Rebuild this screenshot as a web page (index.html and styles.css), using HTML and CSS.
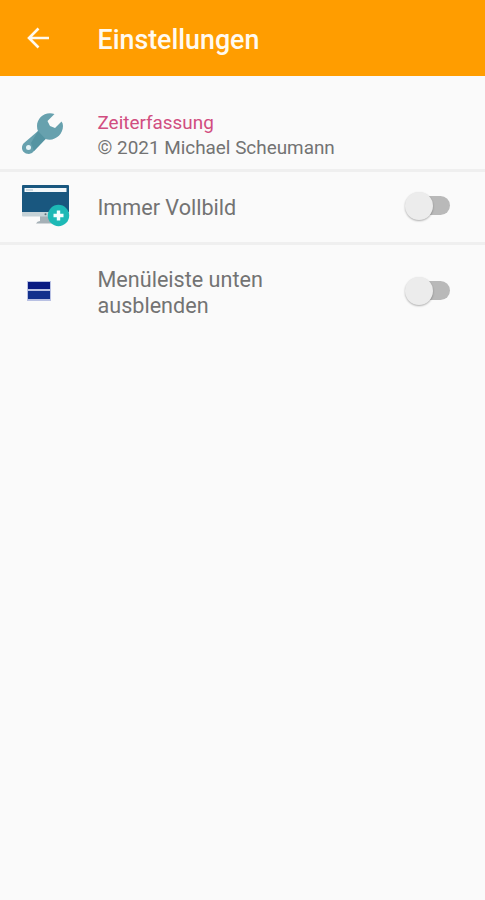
FILE: index.html
```html
<!DOCTYPE html>
<html lang="de">
<head>
    <meta charset="UTF-8">
    <meta name="viewport" content="width=device-width, initial-scale=1.0">
    <title>Einstellungen</title>
    <link rel="stylesheet" href="styles.css">
</head>
<body>

    <header class="toolbar">
        <a href="#" class="back" aria-label="Zurück">
            <svg width="24" height="24" viewBox="0 0 24 24">
                <path d="M12.5 2.5 L3 12 L12.5 21.5 M3 12 H23" fill="none" stroke="#fffaf0" stroke-width="2.6"/>
            </svg>
        </a>
        <h1>Einstellungen</h1>
    </header>

    <main class="settings">
        <section class="row about">
            <div class="icon">
                <svg width="44" height="44" viewBox="0 0 44 44">
                    <path d="M33.500 2 C24 -1 16 6 16 14 Q16 17 17 19 L3 31 C-1 35 1 42 8 42 Q11 42 13 39 L24.500 27 C33 30 42 23 42 14 Q42 11 40.500 9.500 L34 16 L29 14 L26.500 9 Z" fill="#67a1ae"/>
                    <path d="M17 19 L24.500 27 L13 39 L10 31 Z" fill="#5594a2"/>
                    <circle cx="7.500" cy="35.500" r="2.500" fill="#e4f3f6"/>
                </svg>
            </div>
            <div class="text">
                <div class="app-name">Zeiterfassung</div>
                <div class="copyright">© 2021 Michael Scheumann</div>
            </div>
        </section>

        <section class="row fullscreen">
            <div class="icon">
                <svg width="50" height="44" viewBox="0 0 50 44">
                    <path d="M19 32 H30 V38 H36 V39.500 H15 Q16 37 19 37 Z" fill="#a5b0b6"/>
                    <rect x="1" y="1.500" width="47" height="31" rx="1" fill="#c5d2d7"/>
                    <path d="M2 1 H47 Q48 1 48 2 V28 H1 V2 Q1 1 2 1 Z" fill="#19577f"/>
                    <rect x="3.500" y="4" width="42" height="4" fill="#f2f7fa"/>
                    <path d="M5 6 H12" stroke="#a2b9c7" stroke-width="1"/>
                    <circle cx="24.500" cy="30.300" r="1" fill="#60717a"/>
                    <circle cx="37.500" cy="31.500" r="10.700" fill="#1db9b6"/>
                    <path d="M37.500 26.500 V36.500 M32.500 31.500 H42.500" stroke="#f4ffff" stroke-width="3.400"/>
                </svg>
            </div>
            <div class="text">Immer Vollbild</div>
            <label class="switch">
                <input type="checkbox">
                <span class="track"></span>
            </label>
        </section>

        <section class="row menubar">
            <div class="icon">
                <svg width="24" height="20" viewBox="0 0 24 20">
                    <rect width="24" height="20" fill="#b9c1e3"/>
                    <rect x="1" y="1" width="22" height="7" fill="#081a82"/>
                    <rect x="1" y="10" width="22" height="8" fill="#12308c"/>
                </svg>
            </div>
            <div class="text">Menüleiste unten ausblenden</div>
            <label class="switch">
                <input type="checkbox">
                <span class="track"></span>
            </label>
        </section>
    </main>

</body>
</html>
```
FILE: styles.css
```css
body {
    font-family: Roboto, "Liberation Sans", sans-serif;
    margin: 0;
    background-color: #fafafa;
    color: #737373;
}

.toolbar {
    height: 76px;
    display: flex;
    align-items: center;
    background-color: #ff9d00;
    color: #fffaf0;
}

.back {
    width: 71.5px;
    height: 24px;
    padding-left: 26px;
}

.toolbar h1 {
    margin: 3px 0 0;
    font-size: 26.8px;
    font-weight: 500;
    line-height: 30px;
}

.row {
    display: flex;
    align-items: center;
    box-sizing: border-box;
    border-bottom: 3px solid #efefef;
    padding-right: 35px;
}

.about {
    height: 96px;
    padding-top: 22px;
}

.fullscreen {
    height: 73px;
    padding-bottom: 2px;
}

.menubar {
    height: 92px;
    border-bottom: none;
}

.icon {
    width: 76.5px;
    padding-left: 21px;
}

.icon svg {
    display: block;
}

.menubar .icon {
    width: 70.5px;
    padding-left: 27px;
}

.text {
    flex: 1;
    padding-top: 3px;
    font-size: 21.6px;
    line-height: 26px;
}

.menubar .text {
    padding-right: 110px;
}

.app-name {
    font-size: 18.9px;
    line-height: 25px;
    color: #d14d80;
}

.copyright {
    font-size: 18.9px;
    line-height: 26px;
}

.switch {
    display: block;
    width: 45px;
    height: 28px;
    position: relative;
}

.switch input {
    display: none;
}

.track {
    display: block;
    width: 34px;
    height: 19px;
    margin: 4px 0 0 11px;
    border-radius: 10px;
    background-color: #b9b9b9;
}

.track::before {
    content: "";
    position: absolute;
    top: 0;
    left: 0;
    width: 28px;
    height: 28px;
    border-radius: 50%;
    background-color: #ececec;
    box-shadow: 0 1px 2px rgba(0, 0, 0, 0.3);
}

.switch input:checked + .track::before {
    left: 17px;
}
```
